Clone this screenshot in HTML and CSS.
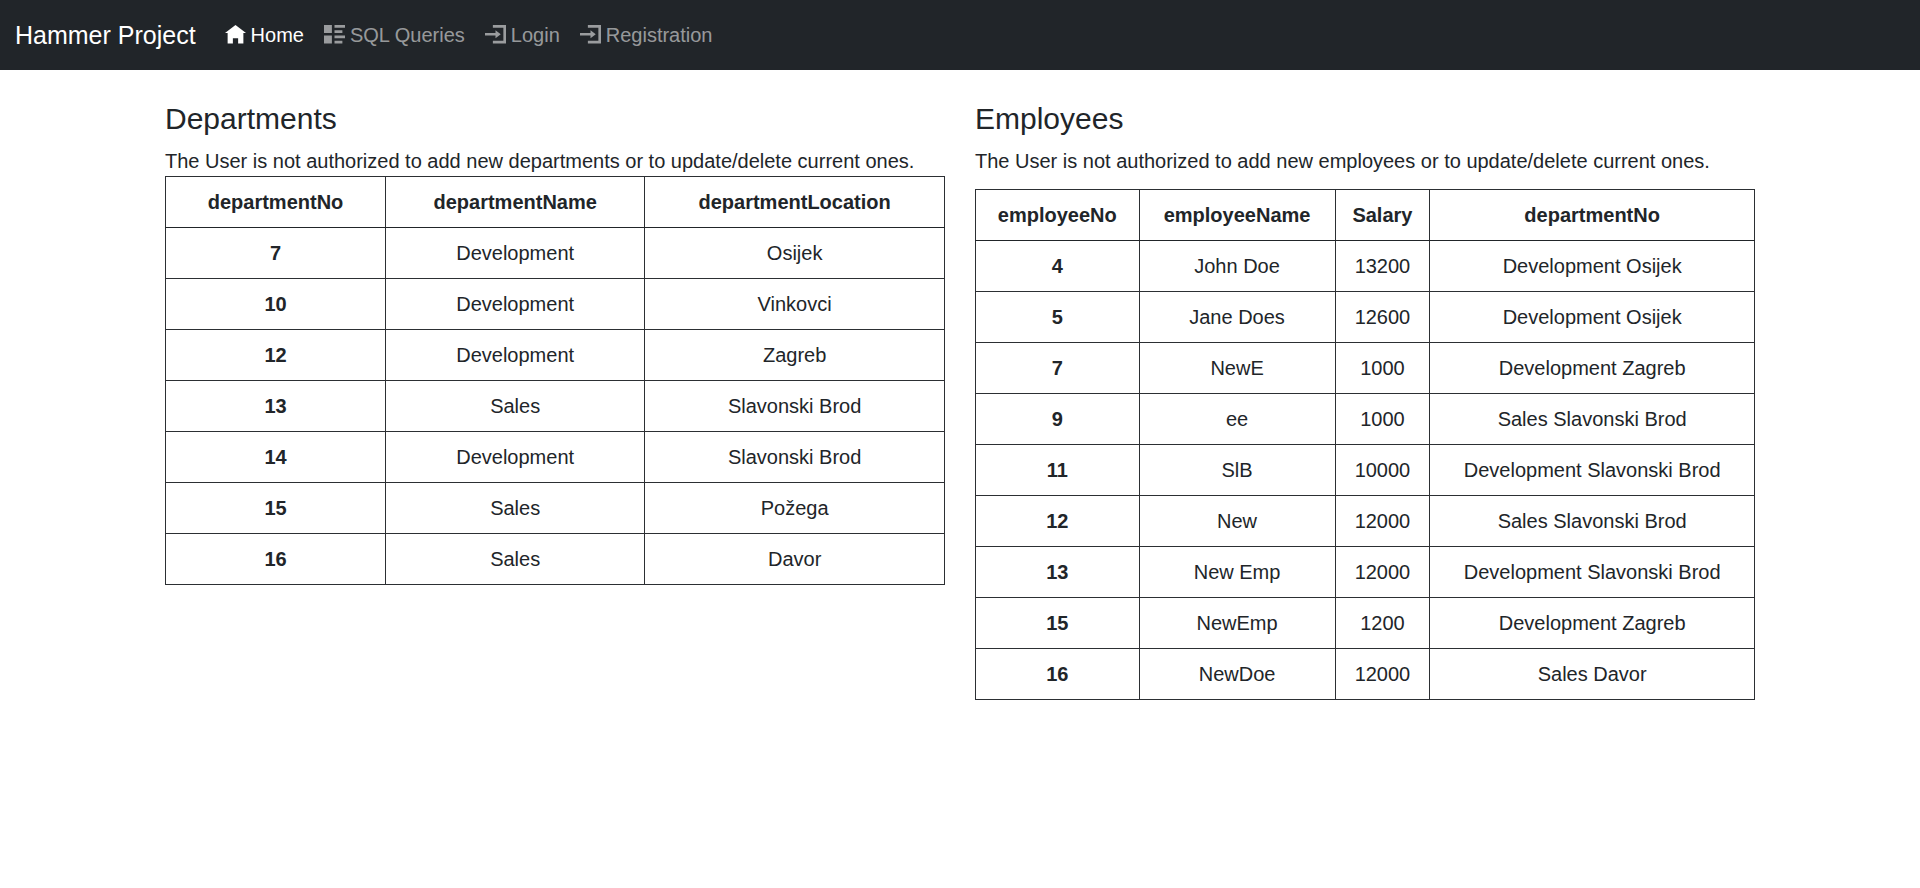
FILE: index.html
```html
<!DOCTYPE html>
<html lang="en">
<head>
<meta charset="utf-8">
<title>Hammer Project</title>
<link rel="stylesheet" href="styles.css">
</head>
<body>
<header>
<nav class="navbar">
<a class="brand" href="#">Hammer Project</a>
<ul class="nav">
<li><a class="nav-link active" href="#"><svg class="icon" viewBox="0 0 8 8" aria-hidden="true"><path d="M4 0l-4 3h1v4h2v-2h2v2h2v-4h1l-4-3z"/></svg>Home</a></li>
<li><a class="nav-link" href="#"><svg class="icon" viewBox="0 0 8 8" aria-hidden="true"><path d="M0 0v3h3v-3h-3zm4 0v1h4v-1h-4zm0 2v1h3v-1h-3zm-4 2v3h3v-3h-3zm4 0v1h4v-1h-4zm0 2v1h3v-1h-3z"/></svg>SQL Queries</a></li>
<li><a class="nav-link" href="#"><svg class="icon" viewBox="0 0 8 8" aria-hidden="true"><path d="M3 0v1h4v5h-4v1h5v-7h-5zm1 2v1h-4v1h4v1l2-1.5-2-1.5z"/></svg>Login</a></li>
<li><a class="nav-link" href="#"><svg class="icon" viewBox="0 0 8 8" aria-hidden="true"><path d="M3 0v1h4v5h-4v1h5v-7h-5zm1 2v1h-4v1h4v1l2-1.5-2-1.5z"/></svg>Registration</a></li>
</ul>
</nav>
</header>
<main class="content">
<section>
<h2>Departments</h2>
<p>The User is not authorized to add new departments or to update/delete current ones.</p>
<table class="table">
<thead><tr><th scope="col">departmentNo</th><th scope="col">departmentName</th><th scope="col">departmentLocation</th></tr></thead>
<tbody>
<tr><th scope="row">7</th><td>Development</td><td>Osijek</td></tr>
<tr><th scope="row">10</th><td>Development</td><td>Vinkovci</td></tr>
<tr><th scope="row">12</th><td>Development</td><td>Zagreb</td></tr>
<tr><th scope="row">13</th><td>Sales</td><td>Slavonski Brod</td></tr>
<tr><th scope="row">14</th><td>Development</td><td>Slavonski Brod</td></tr>
<tr><th scope="row">15</th><td>Sales</td><td>Požega</td></tr>
<tr><th scope="row">16</th><td>Sales</td><td>Davor</td></tr>
</tbody>
</table>
</section>
<section>
<h2>Employees</h2>
<p class="spaced">The User is not authorized to add new employees or to update/delete current ones.</p>
<table class="table">
<thead><tr><th scope="col">employeeNo</th><th scope="col">employeeName</th><th scope="col">Salary</th><th scope="col">departmentNo</th></tr></thead>
<tbody>
<tr><th scope="row">4</th><td>John Doe</td><td>13200</td><td>Development Osijek</td></tr>
<tr><th scope="row">5</th><td>Jane Does</td><td>12600</td><td>Development Osijek</td></tr>
<tr><th scope="row">7</th><td>NewE</td><td>1000</td><td>Development Zagreb</td></tr>
<tr><th scope="row">9</th><td>ee</td><td>1000</td><td>Sales Slavonski Brod</td></tr>
<tr><th scope="row">11</th><td>SlB</td><td>10000</td><td>Development Slavonski Brod</td></tr>
<tr><th scope="row">12</th><td>New</td><td>12000</td><td>Sales Slavonski Brod</td></tr>
<tr><th scope="row">13</th><td>New Emp</td><td>12000</td><td>Development Slavonski Brod</td></tr>
<tr><th scope="row">15</th><td>NewEmp</td><td>1200</td><td>Development Zagreb</td></tr>
<tr><th scope="row">16</th><td>NewDoe</td><td>12000</td><td>Sales Davor</td></tr>
</tbody>
</table>
</section>
</main>
</body>
</html>
```
FILE: styles.css
```css
*, *::before, *::after { box-sizing: border-box; }

body {
  margin: 0;
  font-family: "Liberation Sans", Arial, sans-serif;
  font-size: 20px;
  line-height: 30px;
  color: #212529;
  background: #fff;
}

.navbar {
  display: flex;
  flex-wrap: wrap;
  align-items: center;
  gap: 19px;
  padding: 10px 15px;
  background: #212529;
}

.brand {
  font-size: 25px;
  color: #fff;
  text-decoration: none;
}

.nav {
  display: flex;
  flex-wrap: wrap;
  margin: 0;
  padding: 0;
  list-style: none;
}

.nav-link {
  display: flex;
  align-items: center;
  gap: 5px;
  padding: 10px;
  color: rgba(255, 255, 255, 0.55);
  text-decoration: none;
}

.nav-link.active { color: #fff; }

.icon {
  width: 21px;
  height: 21px;
  fill: currentColor;
}

.content {
  display: grid;
  grid-template-columns: repeat(auto-fit, minmax(600px, 1fr));
  gap: 30px;
  max-width: 1650px;
  margin: 0 auto;
  padding: 30px;
}

h2 {
  margin: 0 0 8px;
  font-size: 30px;
  font-weight: 400;
  line-height: 38px;
}

p { margin: 0; }

.spaced { margin-bottom: 13px; }

.table {
  width: 100%;
  border-collapse: collapse;
  text-align: center;
}

.table th,
.table td {
  padding: 10px;
  border: 1px solid #2c2f33;
}

.table thead th { border-bottom-color: #212529; }
```
